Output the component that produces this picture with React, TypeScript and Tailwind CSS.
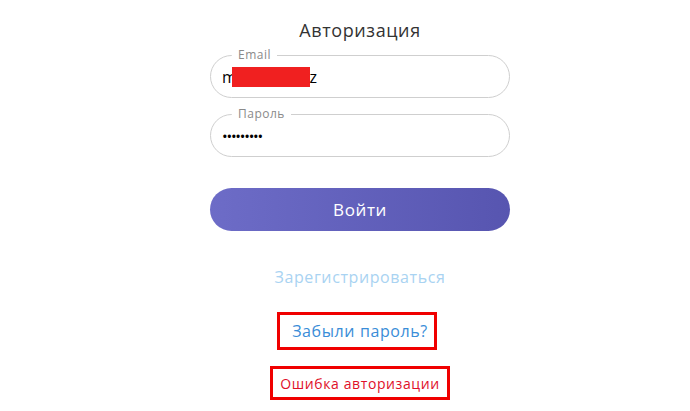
export default function App() {
  return (
    <main className="w-[690px] h-[411px] bg-white overflow-hidden pl-[30px] font-['Open_Sans',sans-serif] tracking-[0.6px]">
      <div className="w-[300px] mx-auto flex flex-col items-center">
        <h1 className="mt-[16px] h-[28px] text-[18px] leading-[28px] text-[#333]">Авторизация</h1>

        {/* email */}
        <div className="relative mt-[11px] w-full h-[43px] border border-[#cfcfcf] rounded-full pl-[11px] flex items-center">
          <span className="absolute -top-[9px] left-[21px] px-[6px] bg-white text-[12px] leading-[16px] text-[#8a8a8a] tracking-[0.5px]">Email</span>
          <div className="flex items-center text-[16px] text-black">
            <span>m</span>
            <span className="w-[78px] h-[20px] bg-[#f02020] -ml-[5px] -mr-[1px]" />
            <span>z</span>
          </div>
        </div>

        {/* password */}
        <div className="relative mt-[16px] w-full h-[43px] border border-[#cfcfcf] rounded-full pl-[11px] flex items-center">
          <span className="absolute -top-[9px] left-[21px] px-[6px] bg-white text-[12px] leading-[16px] text-[#8a8a8a] tracking-[0.5px]">Пароль</span>
          <div className="text-[15px] text-black tracking-[-1.2px] mt-[1px]">•••••••••</div>
        </div>

        <button className="mt-[31px] w-full h-[43px] rounded-full bg-gradient-to-r from-[#6d6cc7] to-[#5755b0] text-white text-[17px]">
          Войти
        </button>

        <div className="mt-[35px] text-[16px] leading-[22px] text-[#a9d3f2]">Зарегистрироваться</div>

        <div className="mt-[24px] -ml-[6px] border-[3px] border-[#f00000] pl-[12px] pr-[6px] h-[38px] flex items-center text-[16px] text-[#3a8dd8]">
          Забыли пароль?
        </div>

        <div className="mt-[16px] border-[3px] border-[#f00000] px-[7px] h-[34px] flex items-center text-[14px] text-[#e0102a]">
          Ошибка авторизации
        </div>
      </div>
    </main>
  );
}
